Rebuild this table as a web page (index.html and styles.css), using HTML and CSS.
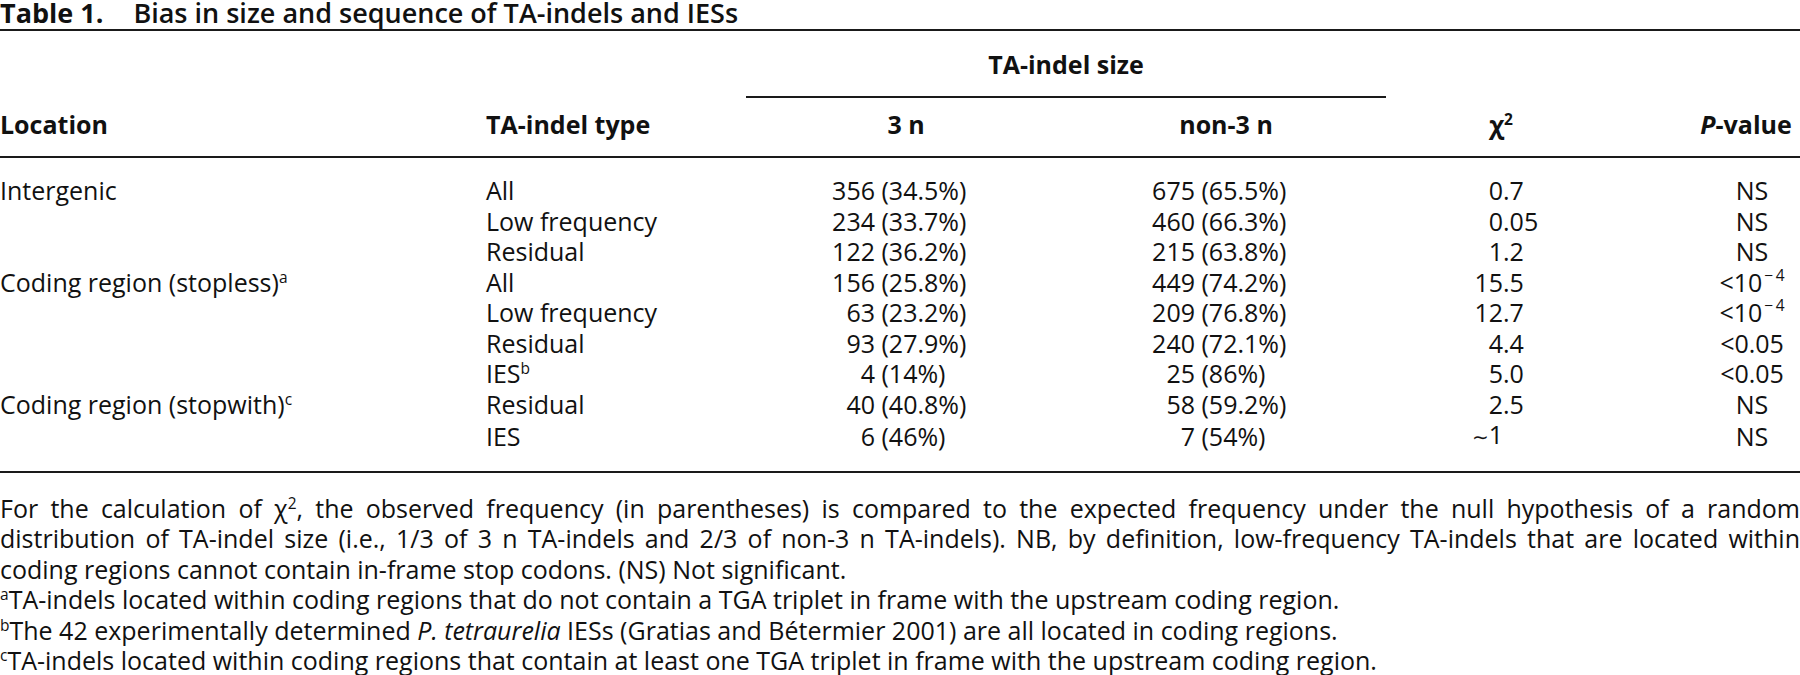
FILE: index.html
```html
<!DOCTYPE html>
<html lang="en">
<head>
<meta charset="utf-8">
<title>Table 1. Bias in size and sequence of TA-indels and IESs</title>
<link rel="stylesheet" href="styles.css">
</head>
<body>
<div class="page">
  <table class="tbl">
    <caption class="title"><span class="tno">Table 1.</span><span class="ttext">Bias in size and sequence of TA-indels and IESs</span></caption>
    <colgroup>
      <col class="c1"><col class="c2"><col class="c3"><col class="c4"><col class="c5"><col class="c6">
    </colgroup>
    <thead>
      <tr class="hr1">
        <th rowspan="2" class="h-left">Location</th>
        <th rowspan="2" class="h-left">TA-indel type</th>
        <th colspan="2" class="spanner">TA-indel size</th>
        <th rowspan="2" class="h-center">χ<sup>2</sup></th>
        <th rowspan="2" class="h-center h-p"><i>P</i>-value</th>
      </tr>
      <tr class="hr2">
        <th class="h-center">3 n</th>
        <th class="h-center">non-3 n</th>
      </tr>
    </thead>
    <tbody>
      <tr>
        <td>Intergenic</td><td>All</td>
        <td class="num"><span class="i">356</span> (34.5%)</td>
        <td class="num"><span class="i">675</span> (65.5%)</td>
        <td class="chi"><span class="i">0</span>.7</td>
        <td class="pv">NS</td>
      </tr>
      <tr>
        <td></td><td>Low frequency</td>
        <td class="num"><span class="i">234</span> (33.7%)</td>
        <td class="num"><span class="i">460</span> (66.3%)</td>
        <td class="chi"><span class="i">0</span>.05</td>
        <td class="pv">NS</td>
      </tr>
      <tr>
        <td></td><td>Residual</td>
        <td class="num"><span class="i">122</span> (36.2%)</td>
        <td class="num"><span class="i">215</span> (63.8%)</td>
        <td class="chi"><span class="i">1</span>.2</td>
        <td class="pv">NS</td>
      </tr>
      <tr>
        <td>Coding region (stopless)<sup>a</sup></td><td>All</td>
        <td class="num"><span class="i">156</span> (25.8%)</td>
        <td class="num"><span class="i">449</span> (74.2%)</td>
        <td class="chi"><span class="i">15</span>.5</td>
        <td class="pv">&lt;10<sup class="exp">&minus;&thinsp;4</sup></td>
      </tr>
      <tr>
        <td></td><td>Low frequency</td>
        <td class="num"><span class="i">63</span> (23.2%)</td>
        <td class="num"><span class="i">209</span> (76.8%)</td>
        <td class="chi"><span class="i">12</span>.7</td>
        <td class="pv">&lt;10<sup class="exp">&minus;&thinsp;4</sup></td>
      </tr>
      <tr>
        <td></td><td>Residual</td>
        <td class="num"><span class="i">93</span> (27.9%)</td>
        <td class="num"><span class="i">240</span> (72.1%)</td>
        <td class="chi"><span class="i">4</span>.4</td>
        <td class="pv">&lt;0.05</td>
      </tr>
      <tr>
        <td></td><td>IES<sup>b</sup></td>
        <td class="num"><span class="i">4</span> (14%)</td>
        <td class="num"><span class="i">25</span> (86%)</td>
        <td class="chi"><span class="i">5</span>.0</td>
        <td class="pv">&lt;0.05</td>
      </tr>
      <tr>
        <td>Coding region (stopwith)<sup>c</sup></td><td>Residual</td>
        <td class="num"><span class="i">40</span> (40.8%)</td>
        <td class="num"><span class="i">58</span> (59.2%)</td>
        <td class="chi"><span class="i">2</span>.5</td>
        <td class="pv">NS</td>
      </tr>
      <tr class="last">
        <td></td><td>IES</td>
        <td class="num"><span class="i">6</span> (46%)</td>
        <td class="num"><span class="i">7</span> (54%)</td>
        <td class="chi"><span class="i"><span class="tilde">∼</span>1</span></td>
        <td class="pv">NS</td>
      </tr>
    </tbody>
  </table>

  <div class="notes">
    <p class="note-main">
      <span class="jl">For the calculation of χ<sup>2</sup>, the observed frequency (in parentheses) is compared to the expected frequency under the null hypothesis of a random</span>
      <span class="jl">distribution of TA-indel size (i.e., 1/3 of 3 n TA-indels and 2/3 of non-3 n TA-indels). NB, by definition, low-frequency TA-indels that are located within</span>
      <span class="ln">coding regions cannot contain in-frame stop codons. (NS) Not significant.</span>
    </p>
    <p class="note"><sup>a</sup>TA-indels located within coding regions that do not contain a TGA triplet in frame with the upstream coding region.</p>
    <p class="note"><sup>b</sup>The 42 experimentally determined <i>P. tetraurelia</i> IESs (Gratias and Bétermier 2001) are all located in coding regions.</p>
    <p class="note"><sup>c</sup>TA-indels located within coding regions that contain at least one TGA triplet in frame with the upstream coding region.</p>
  </div>
</div>
</body>
</html>
```

FILE: styles.css
```css
html, body {
  margin: 0;
  padding: 0;
  background: #ffffff;
  overflow: hidden;
}

.page {
  width: 1800px;
  font-family: "Open Sans", "Noto Sans", "DejaVu Sans", sans-serif;
  font-size: 25px;
  line-height: 30.5px;
  color: #111111;
}

sup {
  font-size: 0.62em;
  line-height: 0;
  vertical-align: 0.55em;
}

sup.exp {
  vertical-align: 0.7em;
  margin-left: 2px;
}

/* ---------- title ---------- */
.title {
  caption-side: top;
  text-align: left;
  font-size: 27px;
  line-height: 23px;
  padding-top: 1px;
  padding-bottom: 5px;
  border-bottom: 2px solid #1a1a1a;
  white-space: nowrap;
}

.tno {
  font-weight: 700;
  margin-right: 30px;
}

.ttext {
  font-weight: 600;
}

/* ---------- table ---------- */
.tbl {
  width: 1800px;
  table-layout: fixed;
  border-collapse: separate;
  border-spacing: 0;
}

.c1 { width: 486px; }
.c2 { width: 260px; }
.c3 { width: 320px; }
.c4 { width: 320px; }
.c5 { width: 230px; }
.c6 { width: 184px; }

.tbl th,
.tbl td {
  padding: 0;
  white-space: nowrap;
  font-weight: 400;
}

.tbl th {
  font-weight: 700;
  vertical-align: bottom;
}

.tbl .hr1 th {
  padding-bottom: 17px;
  border-bottom: 2px solid #1a1a1a;
}

.tbl .hr1 .spanner {
  padding-top: 18px;
  padding-bottom: 16px;
  text-align: center;
}

.tbl .hr2 th {
  padding-top: 11px;
  padding-bottom: 17px;
  border-bottom: 2px solid #1a1a1a;
}

.tbl .h-left { text-align: left; }
.tbl .h-center { text-align: center; }
.tbl .hr1 .h-p { padding-left: 76px; }

.tbl tbody tr:first-child td {
  padding-top: 17px;
}

.tbl tbody tr.last td {
  padding-bottom: 18px;
  border-bottom: 2px solid #1a1a1a;
}

.num .i {
  display: inline-block;
  width: 129px;
  text-align: right;
}

.chi .i {
  display: inline-block;
  width: 117px;
  text-align: right;
}

.tilde {
  font-size: 0.8em;
}

.tbl td.pv {
  padding-left: 88px;
  text-align: center;
}

/* ---------- notes ---------- */
.notes {
  padding-top: 20px;
}

.notes p {
  margin: 0;
}

.jl {
  display: block;
  text-align: justify;
  text-align-last: justify;
}

.ln {
  display: block;
}
```
